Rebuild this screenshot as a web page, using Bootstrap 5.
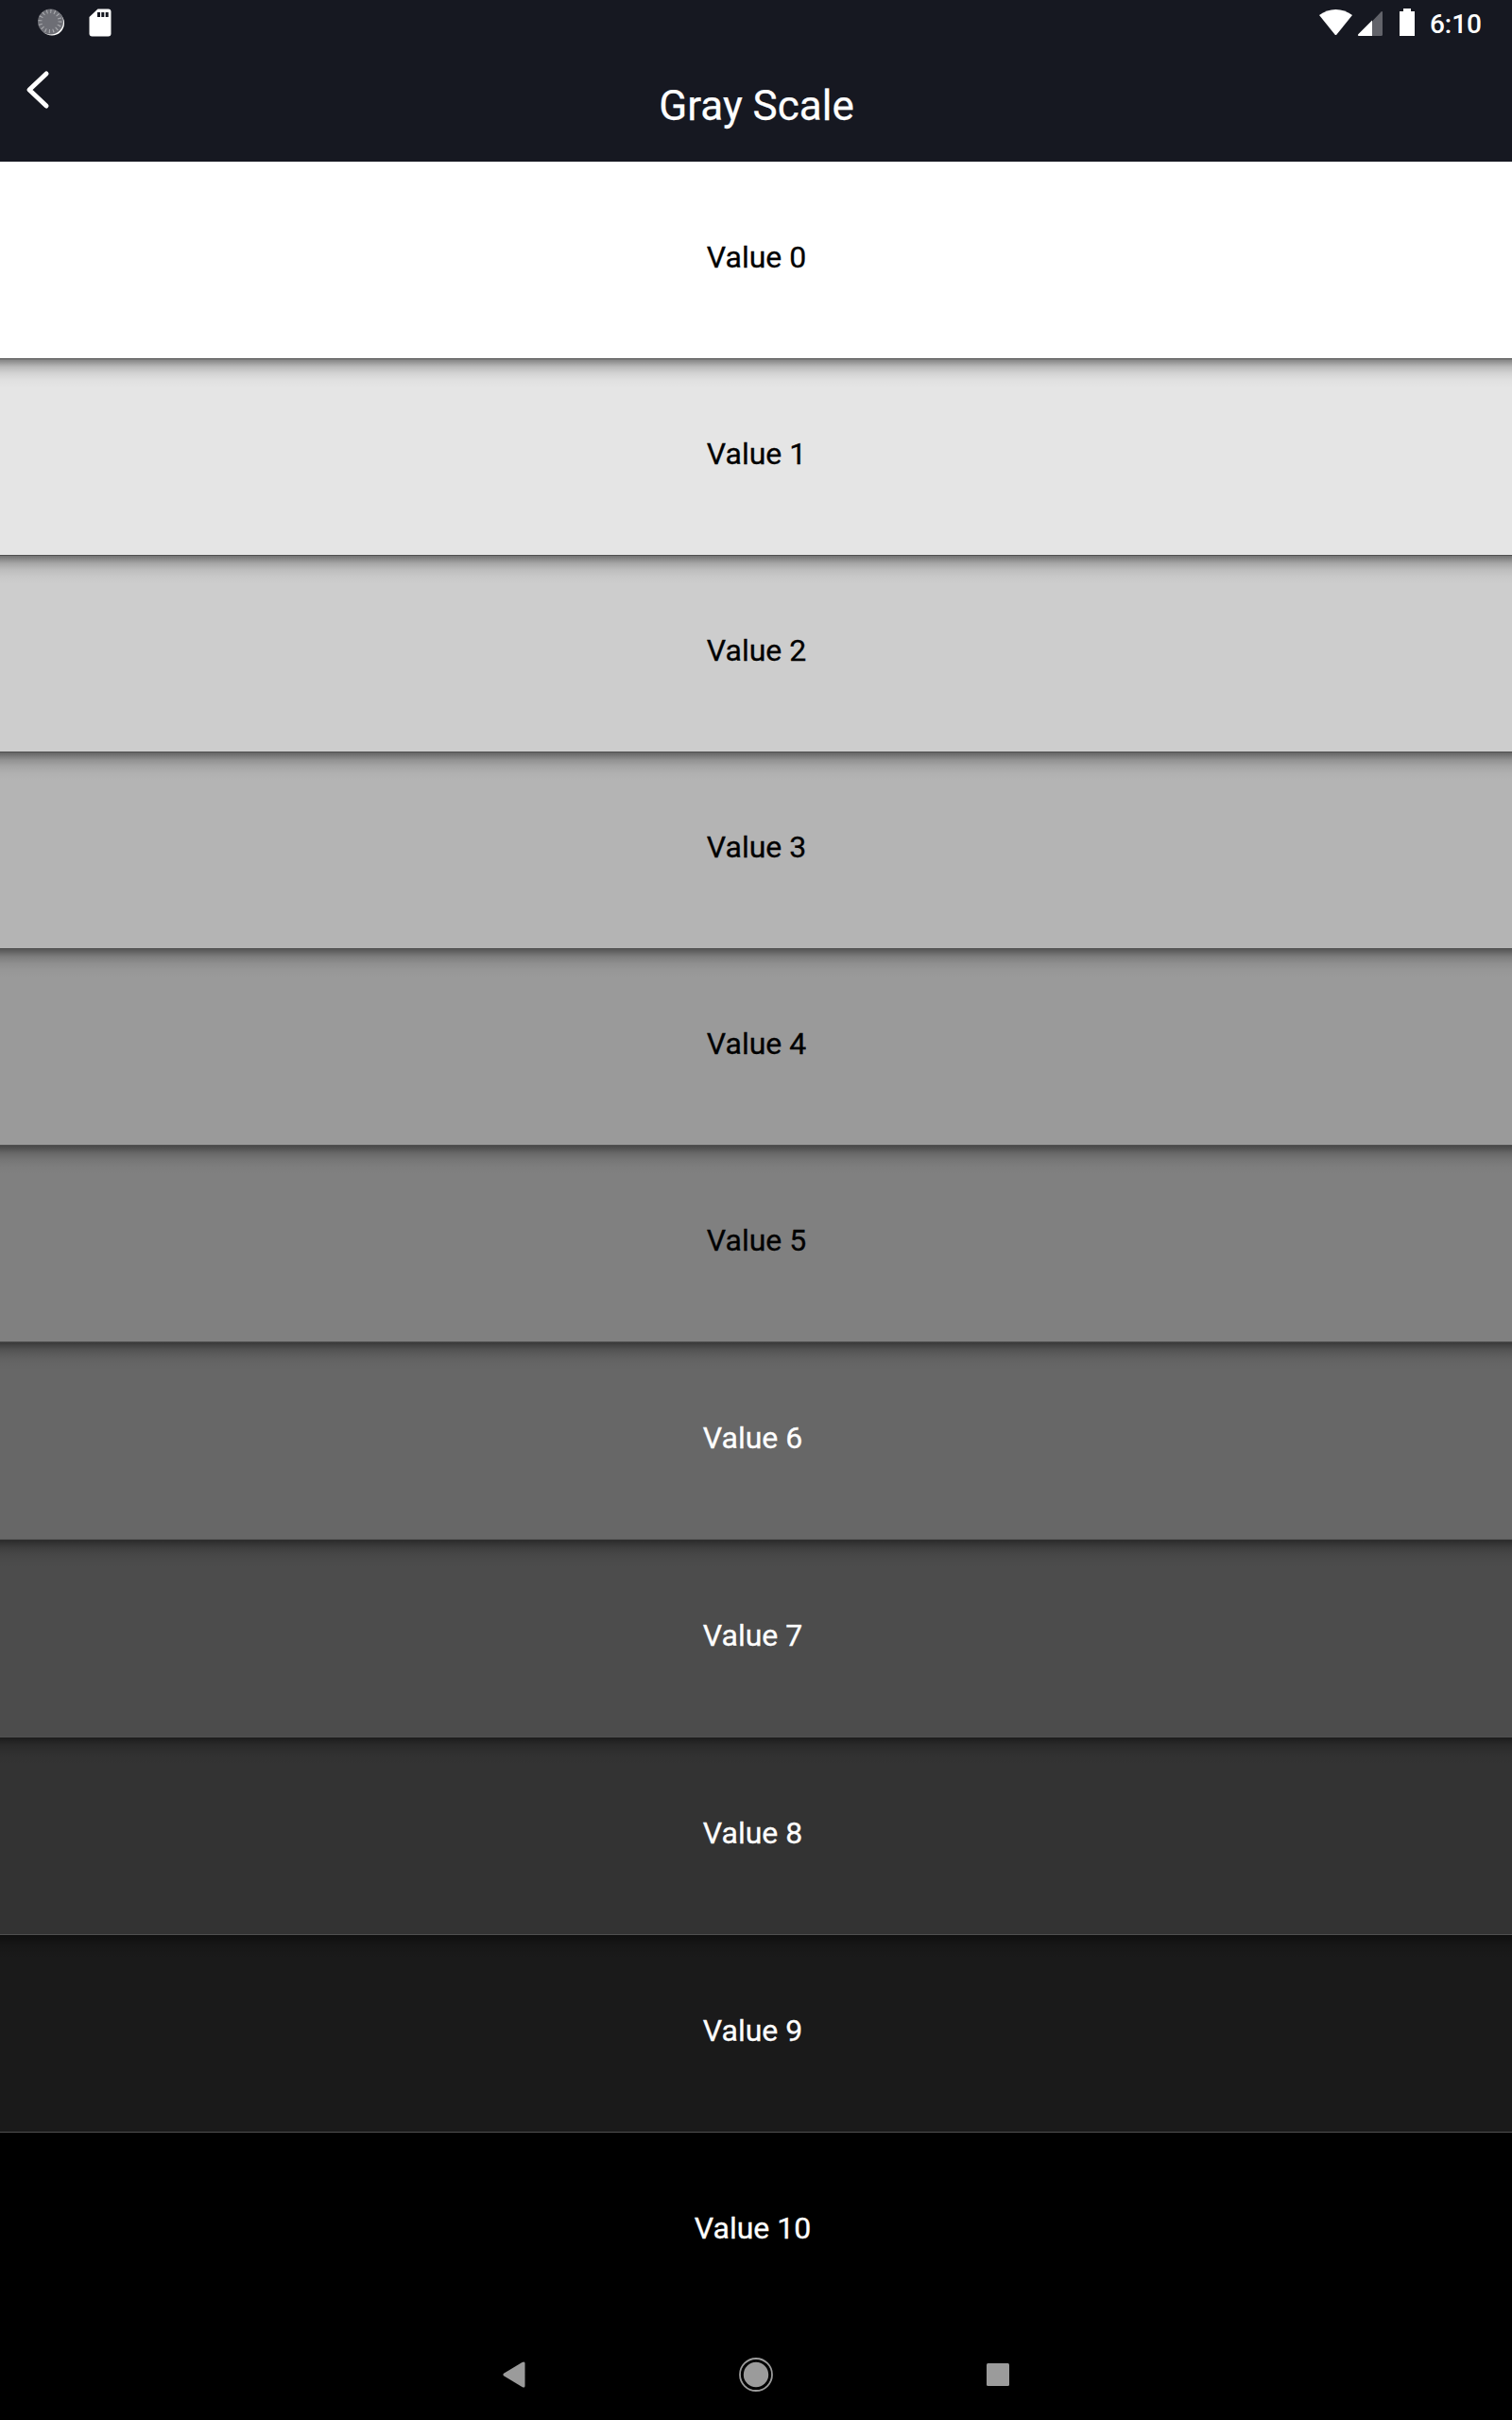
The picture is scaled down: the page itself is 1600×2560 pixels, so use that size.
<!DOCTYPE html>
<html lang="en">
<head>
  <meta charset="UTF-8">
  <meta name="viewport" content="width=device-width, initial-scale=1.0">
  <title>Gray Scale</title>
  <link href="https://cdn.jsdelivr.net/npm/bootstrap@5.3.3/dist/css/bootstrap.min.css" rel="stylesheet">
  <style>
    body {
      height: 2560px;
      background: #000;
      font-family: Roboto, "Liberation Sans", sans-serif;
      overflow: hidden;
    }
    .app-header {
      height: 171px;
      background: #161821;
    }
    .status-bar {
      height: 49px;
      padding: 0 32px 0 40px;
    }
    .clock {
      font-size: 28px;
      line-height: 51px;
      font-weight: 500;
      margin-left: 16px;
    }
    .title-bar {
      height: 122px;
    }
    .title-bar h1 {
      font-size: 44px;
      line-height: 52px;
      font-weight: 400;
      padding: 37px 0 0 1px;
      -webkit-text-stroke: .25px;
    }
    .btn-back {
      left: 24px;
      top: 22px;
    }
    .swatch {
      height: 208px;
      border-bottom: 1px solid #505050;
      font-size: 32px;
      line-height: 48px;
      padding: 76px 0 0 1px;
      color: #000;
      -webkit-text-stroke: .3px;
    }
    .swatch-tall {
      height: 209px;
      padding-top: 77px;
    }
    .swatch-light-text {
      color: #fff;
      padding-right: 8px;
    }
    /* shadow that each row drops on the next one */
    .swatch-shade {
      background-image: linear-gradient(rgba(0,0,0,.44), rgba(0,0,0,.35) 3px, rgba(0,0,0,.19) 8px, rgba(0,0,0,.08) 15px, rgba(0,0,0,.025) 22px, transparent 30px);
    }
    .swatch-last {
      height: 208px;
      border-bottom: 0;
    }
    .nav-keys {
      height: 96px;
    }
  </style>
</head>
<body>
  <header class="app-header text-white">
    <div class="status-bar d-flex justify-content-between">
      <div class="d-flex">
        <svg width="80" height="49" viewBox="0 0 80 49">
          <circle cx="15" cy="24.5" r="13" fill="#fff"/>
          <circle cx="13.5" cy="23" r="13.5" fill="#6d6e75"/>
          <circle cx="13" cy="22.5" r="10.5" fill="none" stroke="#a9aaae" stroke-width="4" stroke-dasharray="1.1 3.023"/>
          <path d="M63.5 9.500H74.500Q77.500 9.500 77.500 12.500V35.500Q77.500 38.500 74.500 38.500H57.500Q54.500 38.500 54.500 35.500V18Z" fill="#fff"/>
          <path d="M63 13h3v5h-3zM67.300 13h3v5h-3zM71.700 13h3v5h-3z" fill="#161821"/>
        </svg>
      </div>
      <div class="d-flex">
        <svg width="102" height="49" viewBox="1395 0 102 49">
          <path d="M1396 16Q1404 10 1413.500 10Q1423 10 1431 16L1414.500 36.500Q1413.500 37.500 1412.500 36.500Z" fill="#fff"/>
          <path d="M1463 13V36.500Q1463 38 1461.500 38H1452V22.500L1461.500 12.500Q1463 11.500 1463 13Z" fill="#62636a"/>
          <path d="M1452 21.500V38H1438Q1436 37.500 1437.500 36Z" fill="#fff"/>
          <path d="M1485 9h8v3h4v26h-16v-26h4z" fill="#fff"/>
        </svg>
        <span class="clock">6:10</span>
      </div>
    </div>
    <div class="title-bar position-relative text-center">
      <a href="#" class="btn-back position-absolute d-block lh-1" aria-label="Back">
        <svg width="32" height="48" viewBox="0 0 32 48"><path d="M25 7L7 24L25 41" fill="none" stroke="#fff" stroke-width="5" stroke-linecap="round" stroke-linejoin="round"/></svg>
      </a>
      <h1 class="m-0">Gray Scale</h1>
    </div>
  </header>

  <main id="scale" class="text-center"></main>

  <footer class="nav-keys">
    <svg class="d-block" width="1600" height="96" viewBox="0 2464 1600 96" fill="#9b9b9b">
      <path d="M533 2513.200Q531.500 2512 533 2510.800L552.500 2499Q555.500 2497.500 555.500 2500V2524Q555.500 2526.500 552.500 2525Z"/>
      <circle cx="800" cy="2512" r="13.200"/>
      <circle cx="800" cy="2512" r="17" fill="none" stroke="#9b9b9b" stroke-width="1.800"/>
      <rect x="1044" y="2500" width="24" height="24" rx="1.500"/>
    </svg>
  </footer>

  <script src="https://cdn.jsdelivr.net/npm/bootstrap@5.3.3/dist/js/bootstrap.bundle.min.js"></script>
  <script>
    const colors = ['#ffffff', '#e5e5e5', '#cdcdcd', '#b4b4b4', '#9a9a9a', '#808080', '#676767', '#4c4c4c', '#333333', '#1a1a1a', '#000000'];
    const scale = document.getElementById('scale');

    colors.forEach((color, i) => {
      const row = document.createElement('div');
      row.className = 'swatch';
      if (i > 0) row.classList.add('swatch-shade');
      if (i === 0 || i > 5) row.classList.add('swatch-tall');
      if (i > 5) row.classList.add('swatch-light-text');
      if (i === 10) row.classList.add('swatch-last');
      row.style.backgroundColor = color;
      row.textContent = `Value ${i}`;
      scale.appendChild(row);
    });
  </script>
</body>
</html>
